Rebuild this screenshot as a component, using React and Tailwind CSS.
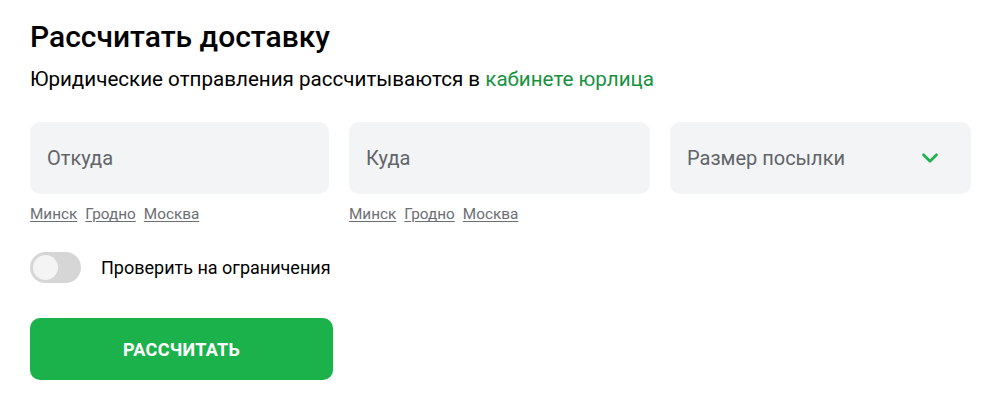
import { ChevronDown } from 'lucide-react';

const cities = ['Минск', 'Гродно', 'Москва'];

function Field({ label, withCities, select }) {
  return (
    <div className="flex flex-col">
      <div className="h-[72px] rounded-[10px] bg-[#f3f4f6] flex items-center justify-between pl-[17px] pr-[28px]">
        <span className="text-[20px] text-[#616469]">{label}</span>
        {select && <ChevronDown className="w-[26px] h-[26px] text-[#1cb24b]" strokeWidth={2.5} />}
      </div>
      {withCities && (
        <div className="flex gap-[8px] mt-[10px] text-[15.3px] text-[#6b6e73] leading-[20px]">
          {cities.map((c) => (
            <a key={c} href="#" className="underline underline-offset-2">{c}</a>
          ))}
        </div>
      )}
    </div>
  );
}

export default function App() {
  return (
    <div className="bg-white w-[998px] h-[409px] px-[30px] pt-[18px] text-black" style={{ fontFamily: 'Roboto, "Noto Sans", sans-serif' }}>
      <h1 className="text-[30px] font-medium leading-[38px]">Рассчитать доставку</h1>
      <p className="text-[20.6px] leading-[26px] mt-[10px]">
        Юридические отправления рассчитываются в{' '}
        <a href="#" className="text-[#16923f]">кабинете юрлица</a>
      </p>
      <div className="grid grid-cols-[299px_301px_301px] gap-[20px] mt-[30px]">
        <Field label="Откуда" withCities />
        <Field label="Куда" withCities />
        <Field label="Размер посылки" select />
      </div>
      <div className="flex items-center gap-[20px] mt-[28px]">
        <div className="w-[51px] h-[31px] rounded-full bg-[#d6d6d6] p-[3px] flex">
          <div className="w-[25px] h-[25px] rounded-full bg-[#f4f4f4]" />
        </div>
        <span className="text-[18px]">Проверить на ограничения</span>
      </div>
      <button className="mt-[35px] w-[303px] h-[62px] rounded-[10px] bg-[#1cb24b] text-white text-[18px] font-bold uppercase tracking-[0.3px]">
        Рассчитать
      </button>
    </div>
  );
}
